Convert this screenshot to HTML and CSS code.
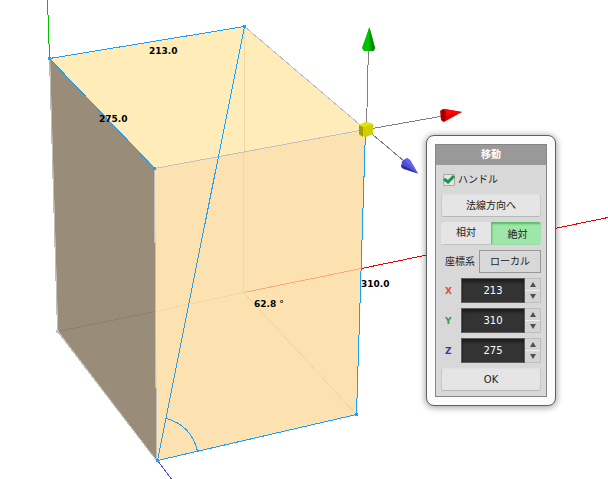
FILE: index.html
```html
<!DOCTYPE html>
<html lang="ja">
<head>
<meta charset="utf-8">
<title>移動</title>
<link rel="stylesheet" href="styles.css">
</head>
<body>
<main class="viewport">
  <svg class="scene" viewBox="0 0 608 479" role="img" aria-label="213 × 310 × 275">
    <g class="faces">
      <polygon class="face-top" points="50,59 245,27 366,130 155,168"/>
      <polygon class="face-side" points="50,59 155,168 157,461 58,331"/>
      <polygon class="face-front" points="155,168 366,130 357,415 157,461"/>
    </g>
    <g class="lines">
      <path class="hidden-edge" d="M244.500 27L243.500 292.500L356.500 414.500M243.500 292.500L155.500 311.500"/>
      <path class="hidden-edge-dark" d="M155.500 311.500L57.500 331.500"/>
      <path class="axis-x-hidden" d="M243.500 292.500L361.500 268.500"/>
      <path class="axis-x" d="M361.500 268.500L608 217.500"/>
      <path class="axis-y" d="M47.500 0L49.500 58.500"/>
      <path class="axis-z" d="M157.500 460.500L171.500 479"/>
      <path class="edge" d="M49.500 58.500L57.500 331.500L156.500 460.500L154.500 168.500L365.500 129.500L244.500 26.500"/>
      <path class="measure" d="M154.500 168.500L49.500 58.500L244.500 26.500L157.500 460.500L356.500 414.500L365.500 129.500"/>
      <path class="measure" d="M166 418.500Q191 425 197.500 451"/>
      <path class="handle-line" d="M366.500 129.500L368.500 44M366.500 129.500L443 116M366.500 129.500L404 161"/>
    </g>
    <g class="points">
      <path class="point" d="M48 57h3v3h-3zM243 25h3v3h-3zM153 167h3v3h-3zM156 459h3v3h-3zM355 413h3v3h-3z"/>
      <path class="point-muted" d="M56 330h3v3h-3z"/>
      <path class="point-hidden" d="M242 291h3v3h-3z"/>
    </g>
    <g class="handles">
      <path fill="#00a800" d="M369.500 27L375 48L374 51H364L362 48z"/>
      <path fill="#00c400" d="M369 28L369 51L364 51L363 48z"/>
      <path fill="#008400" d="M370 30L375 48L372 51z"/>
      <path fill="#e00000" d="M462 112L444 109L440 111L441 120L444 122z"/>
      <path fill="#f80808" d="M462 112L445 109L445 116z"/>
      <path fill="#a00000" d="M441 110L444 109L446 113L445 120L443 122L441 119z"/>
      <path fill="#5050d8" d="M418 173.500L410 160L407 158L402 161L401 167L404 169z"/>
      <path fill="#3030a0" d="M418 173.500L405 166L401 165L402 168L404 169z"/>
      <path fill="#6464e8" d="M418 173.500L410 160L407 158L405 161z"/>
      <path fill="#d0d000" d="M359 125L366 122L373 124V134L366 137L359 135z"/>
      <path fill="#a0a000" d="M359 125L363 127V137L359 134z"/>
      <path fill="#e4e400" d="M359 125L366 122L373 124L364 127z"/>
    </g>
    <g class="dimensions">
      <text x="149" y="54">213.0</text>
      <text x="99" y="122">275.0</text>
      <text x="361" y="287">310.0</text>
      <text x="254" y="307">62.8 °</text>
    </g>
  </svg>

  <form class="panel">
    <div class="panel-inner">
      <h1 class="panel-title">移動</h1>
      <div class="panel-body">
        <label class="check-row">
          <span class="check-box">
            <input class="check" type="checkbox" checked>
            <svg class="check-mark" viewBox="0 0 12 12" aria-hidden="true"><path d="M1 5L5 8L11 2"/></svg>
          </span>
          ハンドル
        </label>
        <button class="button" type="button">法線方向へ</button>
        <div class="toggle">
          <button class="toggle-option" type="button" aria-pressed="false">相対</button>
          <button class="toggle-option toggle-on" type="button" aria-pressed="true">絶対</button>
        </div>
        <div class="system-row">
          <label for="system">座標系</label>
          <select class="system" id="system"><option>ローカル</option></select>
        </div>
        <div class="field">
          <label class="axis-label label-x" for="x">X</label>
          <input class="number" id="x" type="text" inputmode="decimal" value="213">
          <div class="spinner">
            <button class="step" type="button" aria-label="X +"><svg class="arrow" viewBox="0 0 6 5"><path d="M3 0L6 5H0z"/></svg></button>
            <button class="step" type="button" aria-label="X −"><svg class="arrow" viewBox="0 0 6 5"><path d="M0 0H6L3 5z"/></svg></button>
          </div>
        </div>
        <div class="field">
          <label class="axis-label label-y" for="y">Y</label>
          <input class="number" id="y" type="text" inputmode="decimal" value="310">
          <div class="spinner">
            <button class="step" type="button" aria-label="Y +"><svg class="arrow" viewBox="0 0 6 5"><path d="M3 0L6 5H0z"/></svg></button>
            <button class="step" type="button" aria-label="Y −"><svg class="arrow" viewBox="0 0 6 5"><path d="M0 0H6L3 5z"/></svg></button>
          </div>
        </div>
        <div class="field">
          <label class="axis-label label-z" for="z">Z</label>
          <input class="number" id="z" type="text" inputmode="decimal" value="275">
          <div class="spinner">
            <button class="step" type="button" aria-label="Z +"><svg class="arrow" viewBox="0 0 6 5"><path d="M3 0L6 5H0z"/></svg></button>
            <button class="step" type="button" aria-label="Z −"><svg class="arrow" viewBox="0 0 6 5"><path d="M0 0H6L3 5z"/></svg></button>
          </div>
        </div>
        <button class="button" type="button">OK</button>
      </div>
    </div>
  </form>
</main>
</body>
</html>
```
FILE: styles.css
```css
* {
  box-sizing: border-box;
}

body {
  margin: 0;
  background: #fff;
  color: #222;
  font: 10px/12px "DejaVu Sans", "Noto Sans CJK JP", sans-serif;
}

button,
input,
select {
  margin: 0;
  padding: 0;
  border: 0;
  color: inherit;
  font: inherit;
}

.viewport {
  position: relative;
  overflow: hidden;
}

.scene {
  display: block;
  width: 100%;
}

/* Solid */
.face-top { fill: #ffecb8; }
.face-side { fill: #998c78; }
.face-front { fill: #fbe2b0; }

.lines {
  fill: none;
  stroke-width: 1;
  shape-rendering: crispEdges;
}

.edge { stroke: #c0c0c0; }
.hidden-edge { stroke: #efd7a7; }
.hidden-edge-dark { stroke: #8c806d; }
.measure { stroke: #1aa0f8; }
.axis-x { stroke: #e80000; }
.axis-x-hidden { stroke: #ffa878; }
.axis-y { stroke: #00c000; }
.axis-z { stroke: #5050e0; }
.handle-line { stroke: #808080; }

.points { shape-rendering: crispEdges; }
.point { fill: #1aa0f8; }
.point-muted { fill: #c0c0c0; }
.point-hidden { fill: #efd7a7; }

.dimensions {
  fill: #000;
  font-size: 9px;
  font-weight: 700;
}

/* Floating panel */
.panel {
  position: absolute;
  top: 135px;
  left: 426px;
  width: 130px;
  padding: 8px;
  border: 1px solid #606060;
  border-radius: 8px;
  background: #fcfcfc;
  box-shadow: 0 1px 6px 1px rgba(0, 0, 0, 0.35);
}

.panel-inner {
  border: 1px solid #858585;
  background: #d8d8d8;
}

.panel-title {
  margin: 0;
  background: #999;
  color: #fff;
  font-size: 10px;
  line-height: 20px;
  text-align: center;
}

.panel-body {
  display: flex;
  flex-direction: column;
  gap: 5px;
  padding: 5px;
}

.check-row {
  display: flex;
  align-items: center;
  gap: 3px;
  height: 19px;
  padding-left: 2px;
}

.check-box {
  display: grid;
  width: 12px;
  height: 12px;
}

.check,
.check-mark {
  grid-area: 1 / 1;
  width: 12px;
  height: 12px;
}

.check {
  appearance: none;
  border: 1px solid #a8a8a8;
  border-radius: 1px;
  background: #e5e5e5;
}

.check-mark {
  z-index: 1;
  overflow: visible;
  fill: none;
  stroke: #129a45;
  stroke-width: 3;
  pointer-events: none;
}

.button {
  height: 23px;
  border: 1px solid;
  border-color: #e0e0e0 #c8c8c8 #b8b8b8;
  border-radius: 3px;
  background: #e5e5e5;
}

.toggle {
  display: grid;
  grid-template-columns: 1fr 1fr;
  height: 23px;
  overflow: hidden;
  border-radius: 3px;
}

.toggle-option {
  border-bottom: 1px solid #c0c0c0;
  background: #e5e5e5;
}

.toggle-on {
  padding: 4px 0 0 3px;
  border-bottom-color: #98dca2;
  background: #a0e5aa;
  box-shadow: inset 1px 2px 2px #50be60;
}

.system-row {
  display: flex;
  align-items: center;
  justify-content: space-between;
  padding-left: 4px;
}

.system {
  width: 62px;
  height: 23px;
  appearance: none;
  border: 1px solid #999;
  border-radius: 0;
  background: #d8d8d8;
  text-align: center;
  text-align-last: center;
}

.field {
  display: flex;
  align-items: center;
  height: 25px;
}

.axis-label {
  width: 20px;
  padding-left: 4px;
  font-size: 9px;
  font-weight: 700;
}

.label-x { color: #e04848; }
.label-y { color: #30a040; }
.label-z { color: #3838a0; }

.number {
  flex: 1;
  min-width: 0;
  height: 25px;
  border: 1px solid #5c5c5c;
  background: #333;
  box-shadow: inset 0 3px 3px #1c1c1c;
  color: #fff;
  text-align: center;
}

.spinner {
  display: flex;
  flex-direction: column;
  width: 16px;
  height: 25px;
  border: 1px solid #bebebe;
  border-left: 0;
  background: #d4d4d4;
}

.step {
  display: flex;
  flex: 1;
  align-items: center;
  justify-content: center;
  background: none;
}

.step + .step {
  border-top: 1px solid #eee;
}

.arrow {
  width: 6px;
  height: 5px;
  fill: #505050;
}
```
